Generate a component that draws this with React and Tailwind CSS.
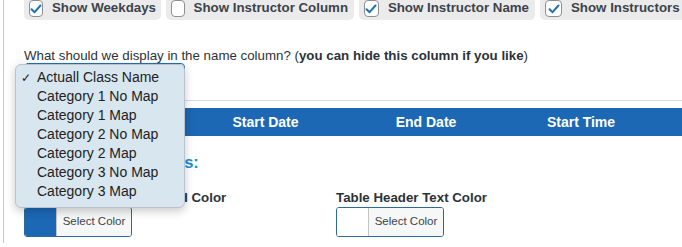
import React from "react";

function Check() {
  return (
    <svg width="12" height="10" viewBox="0 0 12 10" className="block">
      <path d="M1.5 5.2 L4.6 8.2 L10.5 1.5" fill="none" stroke="#2271b1" strokeWidth="2" strokeLinecap="round" strokeLinejoin="round" />
    </svg>
  );
}

function Chip({ label, checked, w }) {
  return (
    <div className={`flex items-end h-[24px] rounded-[5px] bg-[#ebebeb] pl-[5px] pr-[6px] pb-[4px] gap-[9px] shrink-0 ${w}`}>
      <div className="w-[17px] h-[17px] rounded-[4px] border border-[#8c8f94] bg-white flex items-center justify-center mb-[-1px]">
        {checked ? <Check /> : null}
      </div>
      <span className="text-[13.3px] font-bold text-[#3c434a] leading-[16px] whitespace-nowrap">{label}</span>
    </div>
  );
}

function ColorButton({ swatch }) {
  return (
    <div className="flex w-[108px] h-[30px] rounded-[3px] border border-[#2c6a97] overflow-hidden">
      <div className={`w-[31px] h-full ${swatch}`}></div>
      <div className="flex-1 bg-[#f6f7f7] border-l border-[#c3c4c7] flex items-center justify-center text-[11.5px] text-[#3c434a]">
        Select Color
      </div>
    </div>
  );
}

const items = [
  "Actuall Class Name",
  "Category 1 No Map",
  "Category 1 Map",
  "Category 2 No Map",
  "Category 2 Map",
  "Category 3 No Map",
  "Category 3 Map",
];

export default function App() {
  return (
    <div className="relative w-[682px] h-[247px] overflow-hidden bg-white" style={{ fontFamily: '"Liberation Sans", Arial, sans-serif' }}>
      <div className="ml-[3px] h-full border-l border-[#c8c8c8] pl-[20px]">
        <div className="flex gap-[5px] mt-[-4px] w-[700px]">
          <Chip label="Show Weekdays" checked w="w-[137px]" />
          <Chip label="Show Instructor Column" w="w-[188px]" />
          <Chip label="Show Instructor Name" checked w="w-[176px]" />
          <Chip label="Show Instructors" checked w="w-[160px]" />
        </div>

        <div className="mt-[28px] text-[13.3px] leading-[16px] text-[#2c3338] whitespace-nowrap">
          What should we display in the name column? (<b>you can hide this column if you like</b>)
        </div>

        <div className="mt-[-1px] w-[161px] h-[30px] rounded-[4px] border border-[#2271b1] bg-white"></div>

        <div className="mt-[7px] border-t border-[#dcdcde] mr-[-20px]"></div>

        <div className="mt-[7px] flex h-[28px] bg-[#1c68b4] text-white text-[14px] font-bold items-center">
          <div className="w-[161px] text-center">Class</div>
          <div className="w-[161px] text-center">Start Date</div>
          <div className="w-[160px] text-center">End Date</div>
          <div className="w-[150px] text-center">Start Time</div>
          <div className="flex-1"></div>
        </div>

        <div className="mt-[16px] text-[16.5px] font-bold text-[#1a8fd6] leading-[20px]">Table Header Options:</div>

        <div className="mt-[18px] flex">
          <div className="w-[312px]">
            <div className="text-[13.3px] font-bold text-[#2c3338] leading-[16px]">Table Header Background Color</div>
            <div className="mt-[1px]"><ColorButton swatch="bg-[#1c68b4]" /></div>
          </div>
          <div>
            <div className="text-[13.3px] font-bold text-[#2c3338] leading-[16px]">Table Header Text Color</div>
            <div className="mt-[1px]"><ColorButton swatch="bg-white" /></div>
          </div>
        </div>
      </div>

      <div className="absolute left-[15px] top-[64px] w-[170px] h-[144px] rounded-[6px] border border-[#b9c3cb] bg-[#d8e6f0] shadow-[0_3px_10px_rgba(0,0,0,0.22)] pt-[3px]">
        {items.map((t, i) => (
          <div key={t} className="flex items-center h-[19px] text-[14px] text-[#222] whitespace-nowrap">
            <span className="w-[21px] pl-[5px] text-[12px]">{i === 0 ? "✓" : ""}</span>
            <span>{t}</span>
          </div>
        ))}
      </div>
    </div>
  );
}
